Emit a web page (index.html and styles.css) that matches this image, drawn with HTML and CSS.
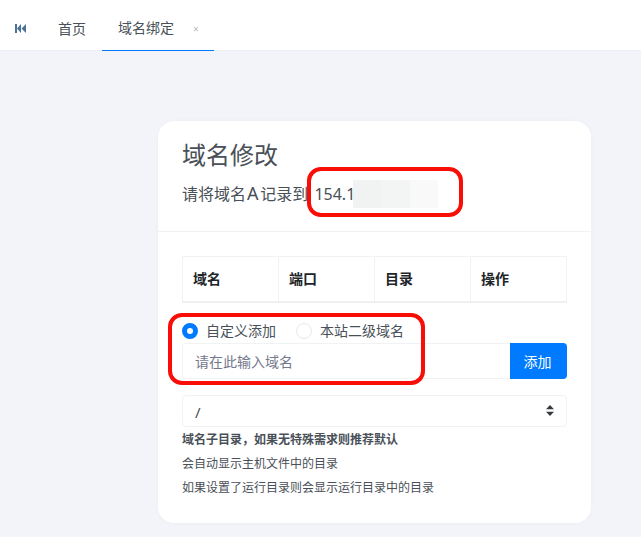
FILE: index.html
```html
<!DOCTYPE html>
<html lang="zh-CN">
<head>
<meta charset="utf-8">
<title>域名修改</title>
<link rel="stylesheet" href="styles.css">
</head>
<body>
<header class="topbar">
  <button class="rewind" aria-label="back">
    <svg width="11" height="9" viewBox="0 0 11 9"><path class="rw" d="M0 0h2v9H0zM6 0v9L2 4.500zM11 0v9L6.500 4.500z"/></svg>
  </button>
  <nav class="tabs">
    <a class="tab">首页</a>
    <a class="tab active">域名绑定<span class="close">×</span></a>
  </nav>
</header>
<main class="page">
  <section class="card">
    <div class="card-head">
      <h1 class="title">域名修改</h1>
      <p class="sub">请将域名<span class="wide">A</span>记录到 <span class="ip">154.1</span></p>
    </div>
    <div class="card-body">
      <table class="table">
        <thead><tr><th>域名</th><th>端口</th><th>目录</th><th>操作</th></tr></thead>
      </table>
      <div class="radios">
        <label class="radio"><span class="dot on"></span><span class="radio-text">自定义添加</span></label>
        <label class="radio"><span class="dot"></span><span class="radio-text">本站二级域名</span></label>
      </div>
      <div class="input-row">
        <div class="input">请在此输入域名</div>
        <button class="add">添加</button>
      </div>
      <div class="select">
        <span class="select-value">/</span>
        <svg width="8" height="11" viewBox="0 0 8 11"><path class="caret" d="M4 0l4 4.300H0zM4 11L0 6.700h8z"/></svg>
      </div>
      <div class="help">
        <p class="strong">域名子目录，如果无特殊需求则推荐默认</p>
        <p>会自动显示主机文件中的目录</p>
        <p>如果设置了运行目录则会显示运行目录中的目录</p>
      </div>
    </div>
  </section>
</main>
<div class="mosaic"><i class="m1"></i><i class="m2"></i><i class="m3"></i></div>
<div class="mark mark-ip"></div>
<div class="mark mark-form"></div>
</body>
</html>
```
FILE: styles.css
```css
* { box-sizing: border-box; }
html, body { margin: 0; height: 100%; }
body {
  position: relative;
  overflow: hidden;
  background: #f3f4f9;
  color: #495057;
  font-family: "Noto Sans", "Noto Sans CJK SC", sans-serif;
  font-size: 14px;
}
p, h1 { margin: 0; font-weight: 400; }
.topbar {
  display: flex;
  height: 51px;
  background: #fff;
  border-bottom: 1px solid #eff0f5;
}
.rewind {
  width: 40px;
  padding: 6px 0 0;
  border: 0;
  background: none;
  display: flex;
  align-items: center;
  justify-content: center;
}
.rw { fill: #4a7396; }
.tabs { display: flex; margin-left: 0; }
.tab {
  position: relative;
  display: flex;
  align-items: center;
  height: 51px;
  padding: 6px 18px 0;
  line-height: 20px;
  color: #495057;
}
.tab:first-child { padding-right: 16px; width: 62px; }
.tab.active {
  width: 112px;
  margin-left: 0;
  padding: 6px 16px 0;
  border-bottom: 1px solid #007bff;
}
.close { position: absolute; left: 91px; top: 19px; font-size: 10px; color: #b4b8bd; }
.page { padding: 70px 50px 0 158px; }
.card {
  width: 433px;
  height: 402px;
  background: #fff;
  border-radius: 16px;
  box-shadow: 0 0 4px rgba(20, 30, 60, .03);
}
.card-head {
  height: 111px;
  padding: 17px 24px 0;
  border-bottom: 1px solid #f1f2f4;
}
.title { font-size: 24px; line-height: 34px; }
.sub { margin-top: 10px; font-size: 16px; line-height: 24px; }
.wide { font-size: 18px; line-height: 1; letter-spacing: 1.7px; margin-left: 1px; }
.ip { margin-left: 2px; }
.card-body { padding: 24px 24px 0; }
.table {
  width: 100%;
  table-layout: fixed;
  border-collapse: collapse;
  border: 1px solid #f1f2f4;
  border-bottom: 2px solid #eef0f2;
}
.table th {
  height: 45px;
  padding: 0 10px 2px;
  text-align: left;
  font-size: 14px;
  font-weight: 700;
  color: #212529;
  border-right: 1px solid #f1f2f4;
}
.radios { display: flex; gap: 20px; height: 20px; margin-top: 18px; }
.radio { display: flex; align-items: center; height: 20px; }
.radio-text { margin-bottom: 2px; }
.dot {
  width: 16px;
  height: 16px;
  margin-right: 8px;
  border: 1px solid #e6e8ea;
  border-radius: 50%;
  background: #fff;
}
.dot.on { border: 5px solid #007bff; }
.input-row { display: flex; height: 36px; margin-top: 2px; }
.input {
  flex: 1;
  padding-left: 12px;
  line-height: 36px;
  color: #74788d;
  border: 1px solid #f1f2f4;
  border-right: 0;
  border-radius: 4px 0 0 4px;
}
.add {
  width: 57px;
  border: 0;
  padding: 0 2px 0 0;
  border-radius: 0 4px 4px 0;
  background: #007bff;
  color: #fff;
  font: inherit;
}
.select {
  display: flex;
  align-items: center;
  justify-content: space-between;
  height: 32px;
  margin-top: 16px;
  padding: 0 12px 0 12px;
  border: 1px solid #f1f2f4;
  border-radius: 4px;
}
.select-value { padding-top: 3px; font-size: 15px; }
.caret { fill: #343a40; }
.help { margin-top: 1px; font-size: 12px; line-height: 24px; }
.strong { font-weight: 700; }
.mosaic { position: absolute; left: 353px; top: 180px; display: flex; height: 28px; }
.mosaic i { display: block; height: 100%; }
.m1 { width: 28px; background: #f1f2f2; }
.m2 { width: 29px; background: #f3f4f4; }
.m3 { width: 28px; background: #f9f9f9; }
.mark { position: absolute; border: 4px solid #f80d07; }
.mark-ip { left: 307px; top: 167px; width: 156px; height: 50px; border-radius: 14px; }
.mark-form { left: 168px; top: 313px; width: 257px; height: 72px; border-radius: 14px; }
```
